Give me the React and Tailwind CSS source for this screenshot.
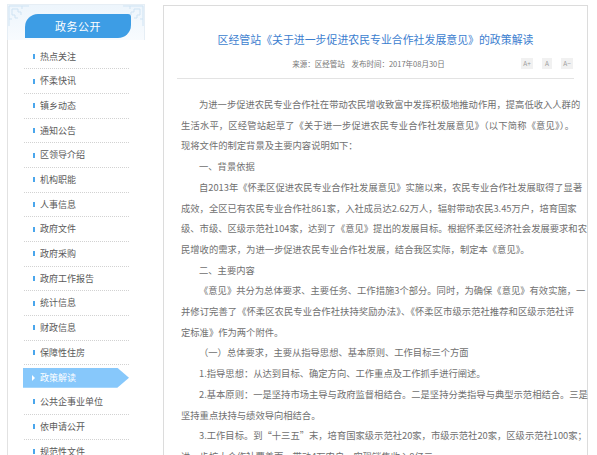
import React from 'react'

const FONT = { fontFamily: '"Noto Sans CJK SC", "Noto Sans", sans-serif' }

const menu = [
  '热点关注', '怀柔快讯', '镇乡动态', '通知公告', '区领导介绍', '机构职能', '人事信息',
  '政府文件', '政府采购', '政府工作报告', '统计信息', '财政信息', '保障性住房',
  '政策解读', '公共企事业单位', '依申请公开', '规范性文件',
]

// [text, indent, justify]
const lines = [
  ['为进一步促进农民专业合作社在带动农民增收致富中发挥积极地推动作用，提高低收入人群的', true, true],
  ['生活水平，区经管站起草了《关于进一步促进农民专业合作社发展意见》（以下简称《意见》）。', false, true],
  ['现将文件的制定背景及主要内容说明如下：', false, false],
  ['一、背景依据', true, false],
  ['自2013年《怀柔区促进农民专业合作社发展意见》实施以来，农民专业合作社发展取得了显著', true, true],
  ['成效，全区已有农民专业合作社861家，入社成员达2.62万人，辐射带动农民3.45万户，培育国家', false, true],
  ['级、市级、区级示范社104家，达到了《意见》提出的发展目标。根据怀柔区经济社会发展要求和农', false, true],
  ['民增收的需求，为进一步促进农民专业合作社发展，结合我区实际，制定本《意见》。', false, false],
  ['二、主要内容', true, false],
  ['《意见》共分为总体要求、主要任务、工作措施3个部分。同时，为确保《意见》有效实施，一', true, true],
  ['并修订完善了《怀柔区农民专业合作社扶持奖励办法》、《怀柔区市级示范社推荐和区级示范社评', false, true],
  ['定标准》作为两个附件。', false, false],
  ['（一）总体要求，主要从指导思想、基本原则、工作目标三个方面', true, false],
  ['1.指导思想：从达到目标、确定方向、工作重点及工作抓手进行阐述。', true, false],
  ['2.基本原则：一是坚持市场主导与政府监督相结合。二是坚持分类指导与典型示范相结合。三是', true, true],
  ['坚持重点扶持与绩效导向相结合。', false, false],
  ['3.工作目标。到“十三五”末，培育国家级示范社20家，市级示范社20家，区级示范社100家；', true, true],
  ['进一步扩大合作社覆盖面，带动4万农户，实现销售收入8亿元。', false, false],
]

function Corner({ flip }) {
  return (
    <svg width="22" height="22" viewBox="0 0 22 22" className={flip ? 'scale-x-[-1]' : ''}>
      <g fill="none" stroke="#cfe3f3" strokeWidth="1">
        <path d="M1 1h20M1 1v20M4 4h6v3h3v3M4 4v6h3v3h3" />
        <path d="M1 14h3M14 1v3" />
      </g>
    </svg>
  )
}

function MenuItem({ label, active }) {
  if (active) {
    return (
      <div className="h-[24.7px] flex items-center">
        <div className="-ml-[1px] w-[106px] h-[20px] bg-[#87c8fb] flex items-center [clip-path:polygon(0_0,89%_0,100%_50%,89%_100%,0_100%)]">
          <span className="ml-[9px] w-0 h-0 border-y-[3px] border-y-transparent border-l-[3px] border-l-white" />
          <span className="ml-[5px] text-[9px] text-white">{label}</span>
        </div>
      </div>
    )
  }
  return (
    <div className="h-[24.7px] flex items-center border-b border-dotted border-[#d2d2d2]">
      <span className="ml-[9px] w-[2px] h-[5px] bg-[#4aa6ec]" />
      <span className="ml-[5px] text-[9px] text-[#5a5a5a]">{label}</span>
    </div>
  )
}

export default function App() {
  return (
    <div className="w-[597px] h-[455px] overflow-hidden bg-white flex items-start" style={FONT}>
      {/* Sidebar */}
      <div className="ml-[7px] mt-[4px] w-[138px] shrink-0">
        <div className="h-[36px] bg-gradient-to-b from-[#edf5fc] to-[#f8fbfe] border-t border-x border-[#e6eef5] relative flex">
          <div className="absolute left-0 top-0"><Corner /></div>
          <div className="absolute right-0 top-0"><Corner flip /></div>
          <div className="relative ml-[17px] mt-[9px] w-[106px] h-[24px] bg-[#3d9de5] rounded-tl-[13px] rounded-tr-[3px] rounded-br-[13px] flex items-center justify-center">
            <span className="text-[11px] text-white tracking-[0.5px]">政务公开</span>
          </div>
        </div>
        <div className="border-l border-[#e2e2e2] pt-[4.5px] h-[420px]">
          <div className="ml-[16px] w-[105px]">
            {menu.map((m) => (
              <MenuItem key={m} label={m} active={m === '政策解读'} />
            ))}
          </div>
        </div>
      </div>

      {/* Content */}
      <div className="ml-[18px] mt-[5px] w-[425px] h-[460px] border border-[#dcdcdc] shrink-0">
        <h1 className="mt-[25px] text-center text-[10.9px] leading-[16px] text-[#3c7ecf]">
          区经管站《关于进一步促进农民专业合作社发展意见》的政策解读
        </h1>
        <div className="mt-[10px] grid grid-cols-[1fr_auto_1fr] items-center h-[13px] pr-[14px]">
          <div />
          <div className="text-[7.5px] text-[#777] whitespace-pre">来源：区经管站    发布时间：2017年08月30日</div>
          <div className="flex justify-end items-center gap-[9px]">
            <span className="w-[12px] h-[11px] bg-[#f1f1f1] text-[6.5px] text-[#999] flex items-center justify-center">A+</span>
            <span className="w-[10px] h-[11px] bg-[#f1f1f1] text-[6.5px] text-[#999] flex items-center justify-center">A</span>
            <span className="w-[12px] h-[11px] bg-[#f1f1f1] text-[6.5px] text-[#999] flex items-center justify-center">A−</span>
          </div>
        </div>
        <div className="mx-[13px] mt-[8px] border-b border-[#e3e3e3]" />
        <div className="mt-[15px] pl-[17px] pr-[13px] text-[9.3px] leading-[20.7px] text-[#707070]">
          {lines.map(([t, indent, justify], i) => (
            <div
              key={i}
              className={
                'whitespace-nowrap ' +
                (indent ? 'pl-[18px] ' : '') +
                (justify ? 'text-justify [text-align-last:justify] whitespace-normal' : '')
              }
            >
              {t}
            </div>
          ))}
        </div>
      </div>
    </div>
  )
}
